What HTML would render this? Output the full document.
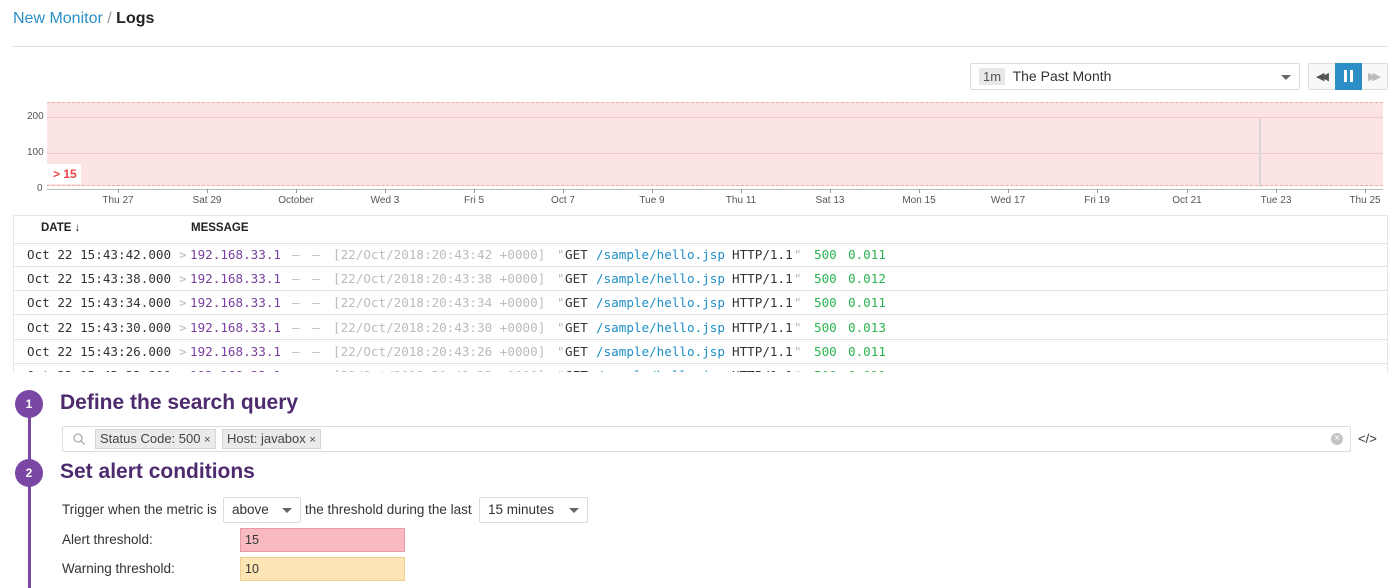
<!DOCTYPE html>
<html><head><meta charset="utf-8"><style>
*{margin:0;padding:0;box-sizing:border-box}
body{width:1400px;height:588px;overflow:hidden;background:#fff;font-family:"Liberation Sans",sans-serif;color:#333;position:relative}
.a{position:absolute;white-space:nowrap}
.ax{position:absolute;top:195px;font-size:10px;color:#555;transform:translateX(-50%)}
.tk{position:absolute;top:189px;width:1px;height:4px;background:#999}
.row{position:absolute;left:14px;width:1373px;height:24px;border-bottom:1px solid #e3e3e3;font-family:"DejaVu Sans Mono","Liberation Mono",monospace;font-size:12.6px;line-height:24px}
.row span{position:absolute;top:0}
.g{color:#bbb}.p{color:#7b3fa0}.b{color:#1f8fc7}.gr{color:#2bb34f}
.step{position:absolute;left:15px;width:28px;height:28px;border-radius:50%;background:#7b47a4;color:#fff;font-size:12px;font-weight:bold;text-align:center;line-height:28px}
.h{position:absolute;left:60px;font-size:21px;font-weight:bold;color:#4e2a6e}
.tag{position:absolute;top:429px;height:20px;background:#eaeaea;border:1px solid #d6d6d6;font-size:13px;line-height:18px;padding:0 4px;color:#444}
.sel{position:absolute;height:26px;border:1px solid #ddd;border-radius:2px;background:#fff;font-size:13.5px;line-height:24px;padding-left:8px;color:#333}
.car{position:absolute;right:8px;top:10px;border-left:5px solid transparent;border-right:5px solid transparent;border-top:5px solid #666}
.lbl{position:absolute;left:62px;font-size:13.5px;color:#333}
</style></head><body>
<div class="a" style="left:13px;top:10px;font-size:16px"><span style="color:#2b8fc5">New Monitor</span> <span style="color:#999">/</span> <b style="color:#222">Logs</b></div>
<div class="a" style="left:12px;top:46px;width:1376px;height:1px;background:#e2e2e2"></div>

<div class="sel" style="left:970px;top:63px;width:330px;height:27px;line-height:25px;font-size:14px"><span style="background:#e8e8e8;padding:1px 4px;color:#555;font-size:13px">1m</span>&nbsp; The Past Month<div class="car" style="top:11px"></div></div>
<div class="a" style="left:1308px;top:63px;width:80px;height:27px;border:1px solid #ddd;border-radius:2px;background:#f8f8f8"></div>
<div class="a" style="left:1316px;top:70px;font-size:11px;color:#555;letter-spacing:-4px">◀◀</div>
<div class="a" style="left:1335px;top:63px;width:27px;height:27px;background:#2b8fc5"></div>
<div class="a" style="left:1344px;top:70px;width:3px;height:12px;background:#fff"></div>
<div class="a" style="left:1350px;top:70px;width:3px;height:12px;background:#fff"></div>
<div class="a" style="left:1368px;top:70px;font-size:11px;color:#bbb;letter-spacing:-4px">▶▶</div>

<div class="a" style="left:47px;top:102px;width:1336px;height:84px;background:#fde4e4;border-top:1px dashed #f4a7a0;border-bottom:1px dashed #f4a7a0"></div>
<div class="a" style="left:47px;top:117px;width:1336px;height:1px;background:#f0caca"></div>
<div class="a" style="left:47px;top:153px;width:1336px;height:1px;background:#f0caca"></div>
<div class="a" style="left:47px;top:189px;width:1336px;height:1px;background:#bbb"></div>
<div class="a" style="left:1259px;top:119px;width:2px;height:68px;background:#d6d6d6"></div>
<div class="a" style="left:47px;top:164px;width:34px;height:20px;background:#fff"></div>
<div class="a" style="left:53px;top:167px;font-size:12px;font-weight:bold;color:#ee4444">&gt; 15</div>
<div class="a" style="left:27px;top:111px;font-size:10px;color:#555">200</div>
<div class="a" style="left:27px;top:147px;font-size:10px;color:#555">100</div>
<div class="a" style="left:37px;top:183px;font-size:10px;color:#555">0</div>
<div class="tk" style="left:118px"></div><div class="ax" style="left:118px">Thu 27</div>
<div class="tk" style="left:207px"></div><div class="ax" style="left:207px">Sat 29</div>
<div class="tk" style="left:296px"></div><div class="ax" style="left:296px">October</div>
<div class="tk" style="left:385px"></div><div class="ax" style="left:385px">Wed 3</div>
<div class="tk" style="left:474px"></div><div class="ax" style="left:474px">Fri 5</div>
<div class="tk" style="left:563px"></div><div class="ax" style="left:563px">Oct 7</div>
<div class="tk" style="left:652px"></div><div class="ax" style="left:652px">Tue 9</div>
<div class="tk" style="left:741px"></div><div class="ax" style="left:741px">Thu 11</div>
<div class="tk" style="left:830px"></div><div class="ax" style="left:830px">Sat 13</div>
<div class="tk" style="left:919px"></div><div class="ax" style="left:919px">Mon 15</div>
<div class="tk" style="left:1008px"></div><div class="ax" style="left:1008px">Wed 17</div>
<div class="tk" style="left:1097px"></div><div class="ax" style="left:1097px">Fri 19</div>
<div class="tk" style="left:1187px"></div><div class="ax" style="left:1187px">Oct 21</div>
<div class="tk" style="left:1276px"></div><div class="ax" style="left:1276px">Tue 23</div>
<div class="tk" style="left:1365px"></div><div class="ax" style="left:1365px">Thu 25</div>

<div class="a" style="left:13px;top:215px;width:1375px;height:158px;border:1px solid #e6e6e6;border-bottom:none;overflow:hidden">
<div class="a" style="left:27px;top:6px;font-size:11.5px;font-weight:bold;color:#222">DATE ↓</div>
<div class="a" style="left:177px;top:6px;font-size:11.5px;font-weight:bold;color:#222">MESSAGE</div>
<div class="a" style="left:0;top:27px;width:1375px;height:1px;background:#e3e3e3"></div>
</div>
<div style="position:absolute;left:0;top:243px;width:1400px;height:129px;overflow:hidden">
<div class="row" style="top:0"><span style="left:13px">Oct 22 15:43:42.000</span><span class="g" style="left:165px">&gt;</span><span class="p" style="left:176px">192.168.33.1</span><span class="g" style="left:278px">–</span><span class="g" style="left:298px">–</span><span class="g" style="left:319px">[22/Oct/2018:20:43:42 +0000]</span><span class="g" style="left:543px">"</span><span style="left:551px">GET</span><span class="b" style="left:582px">/sample/hello.jsp</span><span style="left:718px">HTTP/1.1</span><span class="g" style="left:780px">"</span><span class="gr" style="left:800px">500</span><span class="gr" style="left:834px">0.011</span></div>
<div class="row" style="top:24px"><span style="left:13px">Oct 22 15:43:38.000</span><span class="g" style="left:165px">&gt;</span><span class="p" style="left:176px">192.168.33.1</span><span class="g" style="left:278px">–</span><span class="g" style="left:298px">–</span><span class="g" style="left:319px">[22/Oct/2018:20:43:38 +0000]</span><span class="g" style="left:543px">"</span><span style="left:551px">GET</span><span class="b" style="left:582px">/sample/hello.jsp</span><span style="left:718px">HTTP/1.1</span><span class="g" style="left:780px">"</span><span class="gr" style="left:800px">500</span><span class="gr" style="left:834px">0.012</span></div>
<div class="row" style="top:48px"><span style="left:13px">Oct 22 15:43:34.000</span><span class="g" style="left:165px">&gt;</span><span class="p" style="left:176px">192.168.33.1</span><span class="g" style="left:278px">–</span><span class="g" style="left:298px">–</span><span class="g" style="left:319px">[22/Oct/2018:20:43:34 +0000]</span><span class="g" style="left:543px">"</span><span style="left:551px">GET</span><span class="b" style="left:582px">/sample/hello.jsp</span><span style="left:718px">HTTP/1.1</span><span class="g" style="left:780px">"</span><span class="gr" style="left:800px">500</span><span class="gr" style="left:834px">0.011</span></div>
<div class="row" style="top:73px"><span style="left:13px">Oct 22 15:43:30.000</span><span class="g" style="left:165px">&gt;</span><span class="p" style="left:176px">192.168.33.1</span><span class="g" style="left:278px">–</span><span class="g" style="left:298px">–</span><span class="g" style="left:319px">[22/Oct/2018:20:43:30 +0000]</span><span class="g" style="left:543px">"</span><span style="left:551px">GET</span><span class="b" style="left:582px">/sample/hello.jsp</span><span style="left:718px">HTTP/1.1</span><span class="g" style="left:780px">"</span><span class="gr" style="left:800px">500</span><span class="gr" style="left:834px">0.013</span></div>
<div class="row" style="top:97px"><span style="left:13px">Oct 22 15:43:26.000</span><span class="g" style="left:165px">&gt;</span><span class="p" style="left:176px">192.168.33.1</span><span class="g" style="left:278px">–</span><span class="g" style="left:298px">–</span><span class="g" style="left:319px">[22/Oct/2018:20:43:26 +0000]</span><span class="g" style="left:543px">"</span><span style="left:551px">GET</span><span class="b" style="left:582px">/sample/hello.jsp</span><span style="left:718px">HTTP/1.1</span><span class="g" style="left:780px">"</span><span class="gr" style="left:800px">500</span><span class="gr" style="left:834px">0.011</span></div>
<div class="row" style="top:121px"><span style="left:13px">Oct 22 15:43:22.000</span><span class="g" style="left:165px">&gt;</span><span class="p" style="left:176px">192.168.33.1</span><span class="g" style="left:278px">–</span><span class="g" style="left:298px">–</span><span class="g" style="left:319px">[22/Oct/2018:20:43:22 +0000]</span><span class="g" style="left:543px">"</span><span style="left:551px">GET</span><span class="b" style="left:582px">/sample/hello.jsp</span><span style="left:718px">HTTP/1.1</span><span class="g" style="left:780px">"</span><span class="gr" style="left:800px">500</span><span class="gr" style="left:834px">0.011</span></div>
</div>

<div class="a" style="left:28px;top:404px;width:3px;height:184px;background:#7b47a4"></div>
<div class="step" style="top:390px">1</div>
<div class="h" style="top:391px">Define the search query</div>
<div class="a" style="left:62px;top:426px;width:1289px;height:26px;border:1px solid #ddd;border-radius:2px;background:#fff"></div>
<svg class="a" style="left:72px;top:432px" width="14" height="14" viewBox="0 0 14 14"><circle cx="6" cy="6" r="4" fill="none" stroke="#aaa" stroke-width="1.3"/><line x1="9" y1="9" x2="12.5" y2="12.5" stroke="#aaa" stroke-width="1.3"/></svg>
<div class="tag" style="left:95px">Status Code: 500 <span style="font-size:11px">×</span></div>
<div class="tag" style="left:222px">Host: javabox <span style="font-size:11px">×</span></div>
<div class="a" style="left:1331px;top:433px;width:12px;height:12px;border-radius:50%;background:#c4c4c4;color:#fff;font-size:10px;line-height:12px;text-align:center">×</div>
<div class="a" style="left:1358px;top:431px;font-size:13px;color:#333">&lt;/&gt;</div>

<div class="step" style="top:459px">2</div>
<div class="h" style="top:460px">Set alert conditions</div>
<div class="lbl" style="top:502px">Trigger when the metric is</div>
<div class="sel" style="left:223px;top:497px;width:78px">above<div class="car"></div></div>
<div class="lbl" style="left:305px;top:502px">the threshold during the last</div>
<div class="sel" style="left:479px;top:497px;width:109px">15 minutes<div class="car"></div></div>
<div class="lbl" style="top:532px">Alert threshold:</div>
<div class="a" style="left:240px;top:528px;width:165px;height:24px;background:#f8b9c0;border:1px solid #e89aa3;font-size:12.5px;line-height:22px;padding-left:4px">15</div>
<div class="lbl" style="top:561px">Warning threshold:</div>
<div class="a" style="left:240px;top:557px;width:165px;height:24px;background:#fde5b6;border:1px solid #f0cf8d;font-size:12.5px;line-height:22px;padding-left:4px">10</div>
</body></html>
